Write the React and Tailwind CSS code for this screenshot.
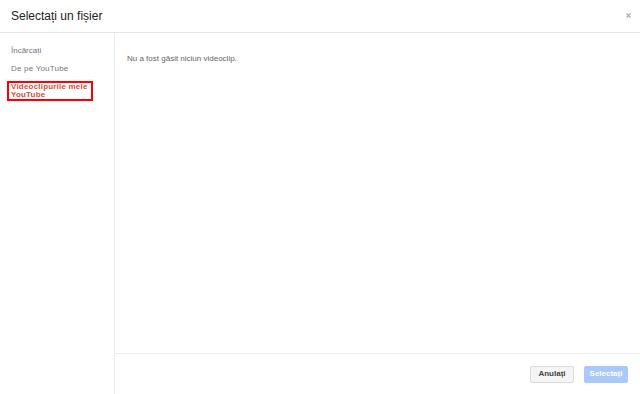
export default function App() {
  const font = { fontFamily: '"Liberation Sans", Arial, sans-serif' };
  return (
    <div className="w-[640px] h-[394px] bg-white flex flex-col overflow-hidden" style={font}>
      <div className="h-[33px] border-b border-[#e5e5e5] flex items-center justify-between pl-[11px] pr-[9px]">
        <h1 className="text-[12px] leading-[14px] text-[#222]">Selectați un fișier</h1>
        <svg width="5" height="5" viewBox="0 0 5 5" className="mb-[1px]">
          <path d="M0.5 0.5 L4.5 4.5 M4.5 0.5 L0.5 4.5" stroke="#a8a8b8" strokeWidth="1.1" />
        </svg>
      </div>

      <div className="flex flex-1">
        <div className="w-[115px] border-r border-[#ebebeb] pt-[13px]">
          <div className="pl-[11px] text-[8px] leading-[10px] text-[#777]">Încărcați</div>
          <div className="pl-[11px] mt-[8px] text-[8px] leading-[10px] text-[#777] tracking-[0.2px]">De pe YouTube</div>
          <div className="ml-[7px] mt-[7px] w-[86px] border-2 border-[#ff0000] pl-[2px] text-[8px] leading-[8px] font-bold text-[#dd4b39] tracking-[0.2px]">
            Videoclipurile mele
            <br />
            YouTube
          </div>
        </div>

        <div className="flex-1 flex flex-col">
          <div className="flex-1 pl-[12px] pt-[21px]">
            <p className="text-[8px] leading-[10px] text-[#666]">Nu a fost găsit niciun videoclip.</p>
          </div>
          <div className="h-[41px] border-t border-[#ebebeb] flex items-center justify-end gap-[10px] pr-[12px]">
            <button className="w-[44px] h-[17px] rounded-[2px] border border-[#dcdcdc] bg-[#f5f5f5] text-[8px] font-bold text-[#444]">
              Anulați
            </button>
            <button className="w-[44px] h-[17px] rounded-[2px] border border-[#a9c8fb] bg-[#a9c8fb] text-[8px] font-bold text-white">
              Selectați
            </button>
          </div>
        </div>
      </div>
    </div>
  );
}
